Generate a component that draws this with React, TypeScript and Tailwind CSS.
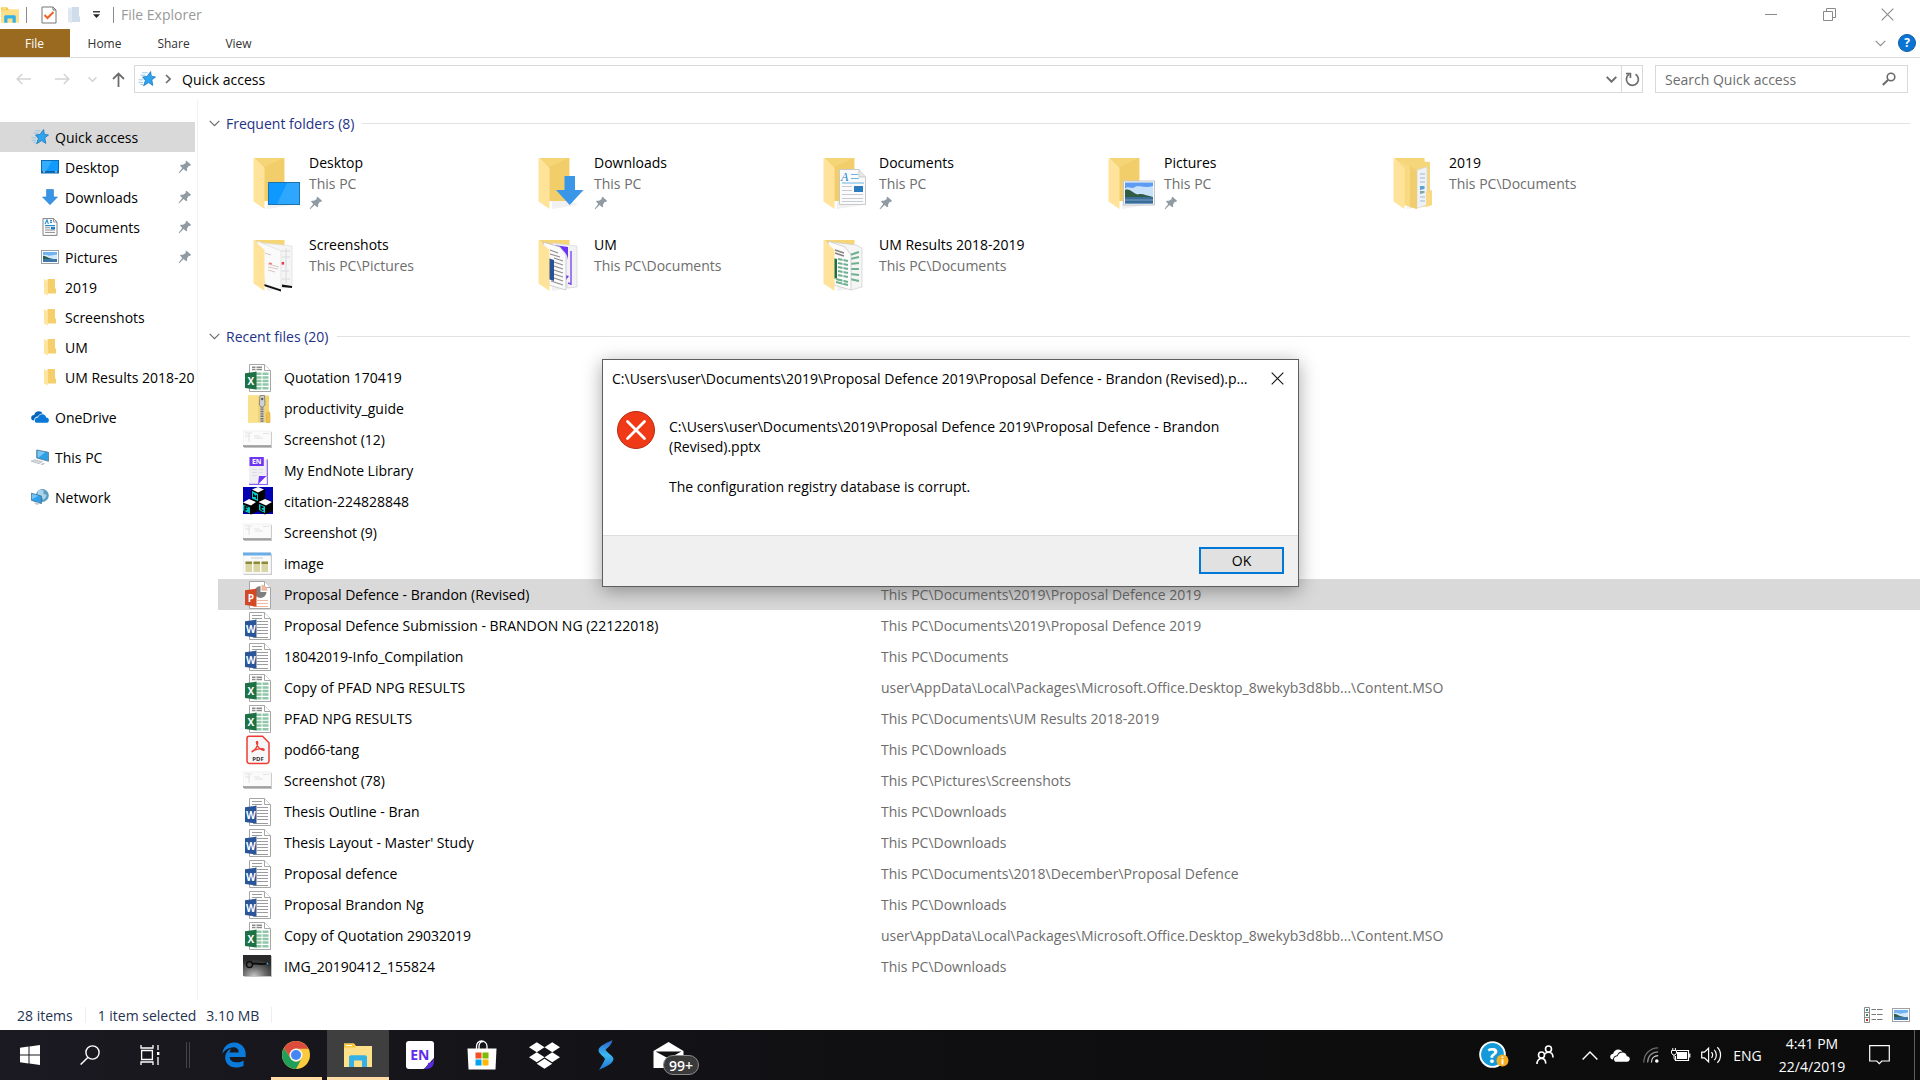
import React from 'react'
import { FaDropbox, FaEdgeLegacy } from 'react-icons/fa'

type FileKind = 'excel' | 'word' | 'ppt' | 'zip' | 'shot' | 'endnote' | 'mfc' | 'image' | 'pdf' | 'photo'

interface RecentFile {
  name: string
  kind: FileKind
  path: string
  selected?: boolean
}

const recentFiles: RecentFile[] = [
  { name: 'Quotation 170419', kind: 'excel', path: '' },
  { name: 'productivity_guide', kind: 'zip', path: '' },
  { name: 'Screenshot (12)', kind: 'shot', path: '' },
  { name: 'My EndNote Library', kind: 'endnote', path: '' },
  { name: 'citation-224828848', kind: 'mfc', path: '' },
  { name: 'Screenshot (9)', kind: 'shot', path: '' },
  { name: 'image', kind: 'image', path: '' },
  {
    name: 'Proposal Defence - Brandon (Revised)',
    kind: 'ppt',
    path: 'This PC\\Documents\\2019\\Proposal Defence 2019',
    selected: true,
  },
  {
    name: 'Proposal Defence Submission - BRANDON NG (22122018)',
    kind: 'word',
    path: 'This PC\\Documents\\2019\\Proposal Defence 2019',
  },
  { name: '18042019-Info_Compilation', kind: 'word', path: 'This PC\\Documents' },
  {
    name: 'Copy of PFAD NPG RESULTS',
    kind: 'excel',
    path: 'user\\AppData\\Local\\Packages\\Microsoft.Office.Desktop_8wekyb3d8bb...\\Content.MSO',
  },
  { name: 'PFAD NPG RESULTS', kind: 'excel', path: 'This PC\\Documents\\UM Results 2018-2019' },
  { name: 'pod66-tang', kind: 'pdf', path: 'This PC\\Downloads' },
  { name: 'Screenshot (78)', kind: 'shot', path: 'This PC\\Pictures\\Screenshots' },
  { name: 'Thesis Outline - Bran', kind: 'word', path: 'This PC\\Downloads' },
  { name: "Thesis Layout - Master' Study", kind: 'word', path: 'This PC\\Downloads' },
  { name: 'Proposal defence', kind: 'word', path: 'This PC\\Documents\\2018\\December\\Proposal Defence' },
  { name: 'Proposal Brandon Ng', kind: 'word', path: 'This PC\\Downloads' },
  {
    name: 'Copy of Quotation 29032019',
    kind: 'excel',
    path: 'user\\AppData\\Local\\Packages\\Microsoft.Office.Desktop_8wekyb3d8bb...\\Content.MSO',
  },
  { name: 'IMG_20190412_155824', kind: 'photo', path: 'This PC\\Downloads' },
]

type FolderKind = 'desktop' | 'downloads' | 'documents' | 'pictures' | '2019' | 'shots' | 'um' | 'results'

const folders: { name: string; parent: string; kind: FolderKind; pinned?: boolean }[] = [
  { name: 'Desktop', parent: 'This PC', kind: 'desktop', pinned: true },
  { name: 'Downloads', parent: 'This PC', kind: 'downloads', pinned: true },
  { name: 'Documents', parent: 'This PC', kind: 'documents', pinned: true },
  { name: 'Pictures', parent: 'This PC', kind: 'pictures', pinned: true },
  { name: '2019', parent: 'This PC\\Documents', kind: '2019' },
  { name: 'Screenshots', parent: 'This PC\\Pictures', kind: 'shots' },
  { name: 'UM', parent: 'This PC\\Documents', kind: 'um' },
  { name: 'UM Results 2018-2019', parent: 'This PC\\Documents', kind: 'results' },
]

/* ---------- small glyphs ---------- */

const PinIcon = () => (
  <svg width="14" height="14" viewBox="0 0 14 14" className="shrink-0" fill="#8f9aa3" aria-hidden="true">
    <path d="M8.5 0.8 13 4.8 12 6 10.8 5.8 9 8.4 9.2 10.4 8.2 11.2 5.6 9 1.2 13.2 0.6 12.8 4.3 7.9 2 5.6 2.9 4.7 5 4.8 7.8 3 7.5 1.8Z" />
  </svg>
)

const StarIcon = () => (
  <svg width="18" height="16" viewBox="0 0 18 16" className="shrink-0" aria-hidden="true">
    <path
      d="M12.6 0.6 13.3 5.2 17.5 6 13.8 8.8 14.8 14.4 10.6 11.6 5.6 14.8 7.4 9.4 4.6 6 9 5.4Z"
      fill="#2ea3ee"
      stroke="#1a78bf"
      strokeWidth="0.8"
    />
    <path d="M4.2 1.8H9.6M2.6 4.2H7.6M0.4 8.8H5.4M0.6 11.4H5M2.4 13.6H5" stroke="#8fc3e8" strokeWidth="0.9" />
  </svg>
)

const Chevron = ({ color = '#6b6b6b', width = 11, strokeWidth = 1.2 }) => (
  <svg width={width} height="7" viewBox="0 0 11 7" className="shrink-0" fill="none" aria-hidden="true">
    <path d="M0.7 0.9 5.5 5.7 10.3 0.9" stroke={color} strokeWidth={strokeWidth} />
  </svg>
)

const CloseIcon = ({ color }: { color: string }) => (
  <svg width="13" height="13" viewBox="0 0 13 13" fill="none" aria-hidden="true">
    <path d="M0.7 0.7 12.3 12.3M12.3 0.7 0.7 12.3" stroke={color} strokeWidth="1.1" />
  </svg>
)

const LandscapeIcon = ({ width = 18, height = 14 }) => (
  <svg width={width} height={height} viewBox="0 0 18 14" className="shrink-0" aria-hidden="true">
    <rect x="0.5" y="0.5" width="17" height="13" fill="#fff" stroke="#9aa1a8" />
    <rect x="2" y="2" width="14" height="10" fill="#6fb2f5" />
    <path d="M2 5.4C4 4 6 5 8 5.8L16 4.4V9H2Z" fill="#d3e9fb" />
    <path d="M2 6C5 5.8 7 8 12 9H2Z" fill="#2e5d4e" />
    <rect x="2" y="9" width="14" height="3" fill="#3d77ab" />
  </svg>
)

/* ---------- navigation pane icons ---------- */

const DesktopIcon = () => (
  <svg width="18" height="14" viewBox="0 0 18 14" aria-hidden="true">
    <rect x="0.5" y="0.5" width="17" height="12.5" fill="#0f9bff" stroke="#0b6cb5" />
    <path d="M11 1 5 11H1V1Z" fill="#35adff" />
    <rect x="1" y="11" width="16" height="1.5" fill="#0d5f9e" />
    <path d="M2 11.8H4M14 11.8H16" stroke="#fff" strokeWidth="0.8" />
  </svg>
)

const DownloadIcon = () => (
  <svg width="16" height="16" viewBox="0 0 16 16" aria-hidden="true">
    <path d="M4.5 0.5H11.5V8H15.5L8 15.7 0.5 8H4.5Z" fill="#3794e6" stroke="#2c7fcb" strokeWidth="0.6" />
  </svg>
)

const DocumentIcon = () => (
  <svg width="16" height="18" viewBox="0 0 16 18" aria-hidden="true">
    <path d="M1 0.6H11.5L15 4V17.4H1Z" fill="#fff" stroke="#818181" />
    <path d="M11.5 0.6V4H15" fill="none" stroke="#818181" strokeWidth="0.8" />
    <path d="M3 6 5 2 6.4 6M8 2.6H10M8 4.4H10M3 7.6H13" stroke="#2490d8" strokeWidth="1.1" fill="none" />
    <path d="M3 9.8H8M3 12H13M3 14.4H13" stroke="#8c8c8c" strokeWidth="1" />
    <rect x="9" y="9" width="4" height="2.4" fill="#1c7fc4" />
  </svg>
)

const SmallFolderIcon = () => (
  <svg width="12" height="18" viewBox="0 0 12 18" aria-hidden="true">
    <path d="M0 1H11V10L12 11V15.5H3.5V1Z" fill="#f5cf6b" />
    <path d="M0 1 3.8 3.2V17.4L0 15.4Z" fill="#ffe49b" />
  </svg>
)

const OneDriveIcon = () => (
  <svg width="18" height="12" viewBox="0 0 18 12" aria-hidden="true">
    <path
      d="M3 9.6C1 9.4 0 8 0.2 6.4 0.5 4.8 1.8 4 3.2 4.1 3.6 1.8 5.6 0.3 7.8 0.3 9.6 0.3 10.8 1.2 11.6 2.4 9 2.4 7.4 3.8 6.8 5.6 4.6 5.6 3 7.4 3 9.6Z"
      fill="#0364b8"
    />
    <path
      d="M6 11.8C4.6 11.8 3.8 10.8 3.8 9.4 3.8 7.6 5.2 6.4 7 6.6 7.6 4.4 9.2 3.2 11.2 3.2 13.4 3.2 14.9 4.6 15.1 6.6 16.8 6.6 17.9 7.8 17.9 9.2 17.9 10.8 16.8 11.8 15.2 11.8Z"
      fill="#0a78d7"
    />
  </svg>
)

const ThisPcIcon = () => (
  <svg width="19" height="17" viewBox="0 0 19 17" aria-hidden="true">
    <path d="M6 0.5 18.5 3V12.5L6 9Z" fill="#2f9fe6" stroke="#5b7386" strokeWidth="0.8" />
    <path d="M7 1.5 15 3 8 8.4 7 8Z" fill="#7cc8f5" />
    <path d="M0 12.4 4 10.8 12 13 8.4 15Z" fill="#d4d9dd" stroke="#a2abb2" strokeWidth="0.6" />
    <path d="M10 15.5 13 14.4 15 15 12 16.5Z" fill="#b4bcc2" />
  </svg>
)

const NetworkIcon = () => (
  <svg width="19" height="18" viewBox="0 0 19 18" aria-hidden="true">
    <circle cx="12" cy="7.4" r="6.8" fill="#5d9dc2" />
    <path d="M7 3C9 1 12 1.4 14 2.6 12 4 13 6 16 6.4 17 8 15 11 13 12 12 9 9 8 7 7Z" fill="#a9d4ea" />
    <path d="M0.4 5 11 8V16L0.4 12.5Z" fill="#2fa0ea" stroke="#426a86" strokeWidth="0.8" />
    <path d="M1 5.8 8 7.6 1 11.4Z" fill="#74c4f5" />
    <path d="M3 15.4 7 14.6 10 16 6 17.4Z" fill="#c3cbd1" />
  </svg>
)

/* ---------- folder tiles ---------- */

const FolderIcon = ({ kind }: { kind: FolderKind }) => {
  const open = kind === '2019' || kind === 'shots' || kind === 'um' || kind === 'results'
  return (
    <svg width="50" height="56" viewBox="0 0 50 56" className="shrink-0" aria-hidden="true">
      <path d="M14 45H34L40 49 14 53Z" fill="#f1f1f1" />
      <path d="M1 2H31.5V45H11V12Z" fill="#f5d576" />
      {!open && <path d="M11 11 31 2V45H11Z" fill="#f0c964" opacity="0.6" />}

      {kind === 'desktop' && (
        <g>
          <rect x="15.5" y="26.5" width="31" height="22" fill="#0d99ff" stroke="#1d72ae" />
          <path d="M34 27H46V48H24Z" fill="#2ea8ff" />
        </g>
      )}
      {kind === 'downloads' && <path d="M26.5 20H37V34H45.5L31.7 49 18 34H26.5Z" fill="#3a97e8" />}
      {kind === 'documents' && (
        <g>
          <path d="M16.5 13.5H36L42.5 21V48.5H16.5Z" fill="#fbfbfb" stroke="#c9c9c9" />
          <path d="M36 13.5V21H42.5" fill="#e7e7e7" stroke="#c9c9c9" />
          <text x="18" y="25" fontSize="12" fontStyle="italic" fontFamily="Liberation Serif" fill="#1c84cf">
            A
          </text>
          <path d="M28 18.5H35M28 22.5H36M19 27H41" stroke="#69b4e4" />
          <path d="M19 30.5H29M19 34.5H29M19 38.5H40M19 42.5H40M19 45.5H40" stroke="#c5ccd2" />
          <rect x="31" y="30" width="9" height="6" fill="#2b7cbf" />
        </g>
      )}
      {kind === 'pictures' && (
        <g>
          <rect x="15.5" y="25" width="31" height="24" fill="#f7f7f7" stroke="#c6c6c6" />
          <rect x="17" y="26.5" width="28" height="21" fill="#5e9bf3" />
          <path d="M17 33C20 29 23 34 27 31 31 28 35 33 45 30V42H17Z" fill="#c8e1fa" />
          <path d="M17 34C22 32 24 37 30 38.5 34 37 39 40 45 41H17Z" fill="#2f5c43" />
          <path d="M17 41H45V47.5H17Z" fill="#3a6c99" />
          <path d="M17 44H45" stroke="#7ca3c5" />
        </g>
      )}

      {kind === '2019' && (
        <g>
          <path d="M6 3 37 6V50L22 52Z" fill="#f6d67b" />
          <path d="M24 14 34 11V49L24 52Z" fill="#eef2f6" stroke="#cfd6dc" strokeWidth="0.6" />
          <path d="M27 18H32M27 22H32M27 26H32M27 41H32M27 45H32" stroke="#9fb9d0" />
          <path d="M27 30H31.5V33L27 34Z" fill="#5ba0d3" />
          <path d="M27 35H31.5V37L27 38Z" fill="#7fa8a0" />
          <path d="M6 5 24 14V53L11 49Z" fill="#f8da82" />
          <path d="M24 14V53L17 51V10Z" fill="#f1cd6d" />
          <path d="M33 36 39 34V49L33 51Z" fill="#f8d882" />
        </g>
      )}
      {kind === 'shots' && (
        <g>
          <path d="M10 5 39 8V49L26 48Z" fill="#f5f5f5" stroke="#dcdcdc" strokeWidth="0.7" />
          <path d="M28 13H37M29 19H37M29 33H36M29 41H37M33 10V45" stroke="#d8dade" />
          <rect x="28.5" y="24" width="2.6" height="2.6" fill="#e63946" />
          <path d="M29 46.5 39 48V50L29 49Z" fill="#111" />
          <path d="M4 3 28 13V52L12 46Z" fill="#fafafa" stroke="#dedede" strokeWidth="0.7" />
          <path d="M12 15 18 17M15 26 26 29M15 29 25 31M15 32 22 34" stroke="#d8c4c6" />
          <path d="M16 25 19 26" stroke="#ee7d84" strokeWidth="1.4" />
          <path d="M11 46 28 51.5V53.5L11 48Z" fill="#111" />
        </g>
      )}
      {kind === 'um' && (
        <g>
          <path d="M14 5 39 8V49L30 50Z" fill="#f2f2f4" stroke="#d7d7dc" strokeWidth="0.7" />
          <path d="M16 7 30 9V22C29 14 24 11 16 7Z" fill="#6b35f5" />
          <path d="M33 13V47M30 45 33 46" stroke="#7c4af0" strokeWidth="1.4" />
          <path d="M27 37 31 38 28 42Z" fill="#6b35f5" />
          <path d="M5 4 22 9 28 17V52L11 47Z" fill="#fbfbfb" stroke="#bcbcbc" strokeWidth="0.7" />
          <path
            d="M12 12 20 15M12 16 22 19M16 20 25 23M16 24 25 27M16 28 25 31M16 32 25 35M16 36 25 39M16 40 25 43M13 43 25 47"
            stroke="#8d8d8d"
            strokeWidth="1.2"
          />
          <path d="M10 20 16 22V43L10 41Z" fill="#285293" />
        </g>
      )}
      {kind === 'results' && (
        <g>
          <path d="M8 4 33 7 39 10V49L28 52Z" fill="#f5f5f5" stroke="#cfcfcf" strokeWidth="0.7" />
          <path d="M27 17 36 14M27 21 36 19M27 26 36 25M27 31 36 31M27 36 36 37M27 41 36 43" stroke="#6fb08e" strokeWidth="2.2" />
          <path d="M5 3 22 9 28 17V52L11 47Z" fill="#fcfcfc" stroke="#c4c4c4" strokeWidth="0.7" />
          <path d="M12 12 21 15M12 15 21 18" stroke="#858585" strokeWidth="1.8" />
          <path
            d="M15 21 25 23M15 25 25 27M15 29 25 31M15 33 25 35M15 37 25 39M13 41 25 44M13 44 25 47"
            stroke="#6fb08e"
            strokeWidth="2"
          />
          <path d="M20 19V46" stroke="#fcfcfc" />
          <path d="M10 20 14 21V40L10 41Z" fill="#1d7044" />
        </g>
      )}

      <path d="M0.5 2 11.5 12V53L0.5 45.5Z" fill="#ffe39a" />
    </svg>
  )
}

/* ---------- file list icons ---------- */

const OfficePage = ({ badge, letter, children }: { badge: string; letter: string; children: React.ReactNode }) => (
  <g>
    <path d="M6.5 2.5H21.5L27.5 8.5V29.5H6.5Z" fill="#fff" stroke="#a6a6a6" />
    <path d="M21.5 2.5V8.5H27.5" fill="#fff" stroke="#a6a6a6" />
    {children}
    <path d="M2 11.2 13.5 9.6V27.6L2 26Z" fill={badge} />
    <text x="7.8" y="22.6" fontSize="10" fontWeight="700" fontFamily="Open Sans" textAnchor="middle" fill="#fff">
      {letter}
    </text>
  </g>
)

const FileIcon = ({ kind }: { kind: FileKind }) => (
  <svg width="30" height="31" viewBox="0 0 30 31" className="block" aria-hidden="true">
    {kind === 'excel' && (
      <OfficePage badge="#1e7145" letter="X">
        <path d="M9 5.3H12.5M13.5 5.3H19M9 7.4H12.5M13.5 7.4H19" stroke="#8b8b8b" strokeWidth="1.5" />
        <path
          d="M13 11.8H18.5M13 15.4H18.5M13 19H18.5M13 22.6H18.5M13 26.2H18.5M19.5 11.8H25.5M19.5 15.4H25.5M19.5 19H25.5M19.5 22.6H25.5M19.5 26.2H25.5"
          stroke="#8fc7a8"
          strokeWidth="2.5"
        />
      </OfficePage>
    )}
    {kind === 'word' && (
      <OfficePage badge="#2a5699" letter="W">
        <path
          d="M9 5.5H19M9 8.5H19M14 11.5H25M14 14.5H25M14 17.5H25M14 20.5H25M14 23.5H25M10 27.5H25"
          stroke="#9c9c9c"
        />
      </OfficePage>
    )}
    {kind === 'ppt' && (
      <OfficePage badge="#d24726" letter="P">
        <path d="M17.5 7A6 6 0 1 0 23.5 13H17.5Z" fill="#7f7f7f" />
        <path d="M18.5 5.8A6 6 0 0 1 24.5 11.8H18.5Z" fill="#f2b79f" />
        <path d="M14 21.5H25M14 24.5H25M10 27.5H25" stroke="#f2b79f" />
      </OfficePage>
    )}
    {kind === 'zip' && (
      <g>
        <path d="M5 2.5H26V18L27 20V29.5H5Z" fill="#f6d46c" />
        <path d="M5 2.5H15V29.5H5Z" fill="#fbe08b" />
        <path d="M23.5 29.5V20.5C25 18 27 19 27 21V29.5Z" fill="#efc24f" stroke="#d9a938" strokeWidth="0.6" />
        <path d="M19 3V29.5" stroke="#d7d0b4" strokeWidth="5" />
        <path d="M19 13V29.5" stroke="#6f6f6f" strokeWidth="3" strokeDasharray="1.4 1" />
        <path d="M17 2.5H21.5L22 12 19.2 14.5 16.4 12Z" fill="#cfd2d5" stroke="#77797c" strokeWidth="0.8" />
        <circle cx="19.2" cy="6" r="1.2" fill="#5c5e60" />
      </g>
    )}
    {kind === 'shot' && (
      <g>
        <rect x="1" y="8" width="28" height="16" fill="#c5c5c5" />
        <rect x="0" y="7" width="28" height="15.5" fill="#fbfbfb" stroke="#e1e1e1" strokeWidth="0.5" />
        <path d="M2 9H9M2 12H7M6 9V18M11 12H17M12 14H20M20 9.5H26" stroke="#e2e2e2" />
        <path d="M0 22H28" stroke="#5c5c5c" />
      </g>
    )}
    {kind === 'endnote' && (
      <g>
        <path d="M6 2H20.5V4H25V30H6Z" fill="#efeff3" />
        <path d="M24.3 4.5V29.3H6" fill="none" stroke="#8a63ee" strokeWidth="1.2" />
        <path d="M6.5 2H20.8V11H6.5Z" fill="#6f35f5" />
        <path d="M9 14.5H14M9 17.5H14M9 20.5H14M16 14.5H20M16 17.5H20" stroke="#dcdce4" />
        <path d="M15 29.5 16 21H24Z" fill="#6f35f5" />
        <path d="M16 28.5 23.5 21V29Z" fill="#fff" />
        <text x="13.7" y="9.2" fontSize="7" fontWeight="700" fontFamily="Open Sans" textAnchor="middle" fill="#fff">
          EN
        </text>
      </g>
    )}
    {kind === 'mfc' && (
      <g>
        <rect x="0" y="1" width="30" height="27" fill="#0000b4" />
        <path d="M0 17 8 12.5 8 4 14 1.5 22 3.5V12.5L30 16V25L22 28.5 15 25 8 28.5 0 25Z" fill="#000" />
        <path d="M9 3.5 15 1 21 3.5 15 6.5Z" fill="#fff" />
        <path d="M9 5 15 8V15L9 12.5Z" fill="#00d5d5" />
        <path d="M0 16.5 6 13 13 16 8 19.5Z" fill="#fff" />
        <path d="M0 18.5 7 21.5V27.5L0 24.5Z" fill="#00c8c8" />
        <path d="M15.5 16 22 13 29 16 23 19.5Z" fill="#fff" />
        <path d="M16 18 22 20.5V27L16 24Z" fill="#00d5d5" />
        <path d="M10.5 11V8.5L12 10.5 13.5 9.8V13M2 25V20.5L5 21.5M2 23 4 23.6M20.5 21.5 18 20.2V23.5L20.5 24.8" stroke="#000" strokeWidth="1.2" fill="none" />
      </g>
    )}
    {kind === 'image' && (
      <g>
        <rect x="1" y="6" width="28" height="21" fill="#c8c8c8" />
        <rect x="0" y="5" width="28" height="21" fill="#fafafa" stroke="#d8d8d8" strokeWidth="0.5" />
        <rect x="0" y="4.5" width="28" height="3" fill="#6aaee6" />
        <path d="M8 10H20" stroke="#c9ced2" />
        <path d="M2.5 14H9V24H2.5ZM10.5 14H17V24H10.5ZM18.5 14H25V24H18.5Z" fill="#d9d6a4" />
        <path d="M2.5 13.5H9V16H2.5ZM10.5 13.5H17V16H10.5ZM18.5 13.5H25V16H18.5Z" fill="#8d8a36" />
      </g>
    )}
    {kind === 'pdf' && (
      <g>
        <path
          d="M6 2.2H19.5L26 8.7V27C26 28.6 25.2 29.4 23.6 29.4H6.4C4.8 29.4 4 28.6 4 27V4.6C4 3 4.6 2.2 6 2.2Z"
          fill="#f7f7f7"
          stroke="#ee3b32"
          strokeWidth="1.5"
        />
        <path
          d="M9.5 17.6C12 16.5 15 12 14.6 8.2 14.4 7 13.2 7.4 13.5 9 14 12 17 16 20.4 16.3 21.8 16.2 21.2 14.6 19 14.6 15.5 14.6 12.5 15.4 9.8 16.8 8.6 17.6 9 18.2 9.5 17.6Z"
          fill="none"
          stroke="#ee3b32"
          strokeWidth="1.3"
        />
        <text x="15" y="26.6" fontSize="6" fontWeight="700" fontFamily="Open Sans" textAnchor="middle" fill="#333">
          PDF
        </text>
      </g>
    )}
    {kind === 'photo' && (
      <g>
        <defs>
          <radialGradient id="photo-glow" cx="0.4" cy="1" r="0.8">
            <stop offset="0" stopColor="#c4c4c4" />
            <stop offset="0.5" stopColor="#6c6c6c" />
            <stop offset="1" stopColor="#2a2a2a" />
          </radialGradient>
        </defs>
        <rect x="1" y="5" width="28" height="21" fill="#c4c4c4" />
        <rect x="0" y="4" width="28" height="21" fill="url(#photo-glow)" />
        <circle cx="6.5" cy="13.5" r="3" fill="none" stroke="#0c0c0c" strokeWidth="1.4" />
        <path d="M9 13C14 11 18 15 26 12" stroke="#0c0c0c" strokeWidth="1.8" fill="none" />
        <circle cx="24.5" cy="12.5" r="1" fill="#4ba3e0" />
      </g>
    )}
  </svg>
)

/* ---------- taskbar icons ---------- */

const ExplorerIcon = ({ size }: { size: number }) => (
  <svg width={size} height={size} viewBox="0 0 28 28" aria-hidden="true">
    <path d="M0 2.5H10L12 5H28V26H0Z" fill="#ffe08a" />
    <path d="M0 2.5H10L12 6.5H0Z" fill="#f8c73b" />
    <path d="M2 4.5H8" stroke="#fff" strokeWidth="1" />
    <path d="M5 26V16.5C5 15 5.8 14.2 7.2 14.2H20.8C22.2 14.2 23 15 23 16.5V26H18V19.5H10V26Z" fill="#35b1e6" />
  </svg>
)

const ChromeIcon = () => (
  <svg width="28" height="28" viewBox="0 0 28 28" aria-hidden="true">
    <circle cx="14" cy="14" r="14" fill="#fccb3d" />
    <path d="M1.9 7A14 14 0 0 1 26.1 7L26.2 7.8H14A6.4 6.4 0 0 0 8.5 17.2Z" fill="#dd4b3e" />
    <path d="M1.9 7A14 14 0 0 0 14 28L19.8 17.2A6.4 6.4 0 0 1 8.5 17.2L1.9 7Z" fill="#1f9f5a" />
    <circle cx="14" cy="14" r="6.5" fill="#f4f4f4" />
    <circle cx="14" cy="14" r="5" fill="#4586f3" />
  </svg>
)

const TaskButton = ({
  label,
  width = 'w-[62px]',
  state = '',
  children,
}: {
  label: string
  width?: string
  state?: string
  children: React.ReactNode
}) => (
  <button type="button" aria-label={label} className={`relative flex h-full ${width} items-center justify-center ${state}`}>
    {children}
  </button>
)

/* ---------- page sections ---------- */

const TitleBar = () => (
  <header className="flex h-[29px] items-start">
    <div className="flex h-[29px] items-center">
      <div className="w-[26px] pl-px">
        <ExplorerIcon size={18} />
      </div>
      <div className="h-4 w-px bg-[#8a8a8a]" />
      <button type="button" aria-label="Properties" className="ml-[14px]">
        <svg width="16" height="18" viewBox="0 0 16 18" aria-hidden="true">
          <path d="M1 1H12L15 4V17H1Z" fill="#fff" stroke="#767676" />
          <path d="M12 1V4H15" fill="none" stroke="#767676" />
          <path d="M3.5 9 6.5 12 12.5 6" stroke="#f0602a" strokeWidth="2" fill="none" />
        </svg>
      </button>
      <button type="button" aria-label="New folder" className="ml-[11px]">
        <svg width="12" height="18" viewBox="0 0 12 18" aria-hidden="true">
          <path d="M0 1H11V10L12 11V16H3.5V1Z" fill="#cfdcea" />
          <path d="M0 1 3.8 3.2V17.4L0 15.4Z" fill="#dfe8f2" />
        </svg>
      </button>
      <button type="button" aria-label="Customize Quick Access Toolbar" className="ml-[13px]">
        <svg width="7" height="8" viewBox="0 0 7 8" aria-hidden="true">
          <path d="M0 0.8H7" stroke="#222" strokeWidth="1.3" />
          <path d="M0 3.2H7L3.5 7Z" fill="#222" />
        </svg>
      </button>
      <div className="ml-[13px] h-4 w-px bg-[#8a8a8a]" />
      <h1 className="ml-[7px] text-[14px] text-[#999]">File Explorer</h1>
    </div>
    <div className="ml-auto flex h-[29px] pr-1">
      <button type="button" aria-label="Minimize" className="flex w-[58px] items-center justify-center">
        <span className="h-px w-3 bg-[#8a8a8a]" />
      </button>
      <button type="button" aria-label="Restore" className="flex w-[58px] items-center justify-center">
        <svg width="13" height="13" viewBox="0 0 13 13" fill="none" stroke="#8a8a8a" aria-hidden="true">
          <path d="M0.5 3.5H9.5V12.5H0.5ZM3.5 3.5V0.5H12.5V9.5H9.5" />
        </svg>
      </button>
      <button type="button" aria-label="Close" className="flex w-[58px] items-center justify-center">
        <CloseIcon color="#8a8a8a" />
      </button>
    </div>
  </header>
)

const Ribbon = () => (
  <nav className="flex h-[29px] items-stretch border-b border-[#dadbdc] text-[12px] text-[#333]">
    <button type="button" className="w-[70px] bg-[#996a1f] pt-[2px] pr-px text-white">
      File
    </button>
    <button type="button" className="w-[69px] pt-[2px]">
      Home
    </button>
    <button type="button" className="w-[69px] pt-[2px]">
      Share
    </button>
    <button type="button" className="w-[61px] pt-[2px]">
      View
    </button>
    <div className="ml-auto flex items-center gap-[11px] pr-1">
      <button type="button" aria-label="Expand the Ribbon">
        <Chevron color="#8f8f8f" width={13} />
      </button>
      <button
        type="button"
        aria-label="Help"
        className="flex h-[18px] w-[18px] items-center justify-center rounded-full border border-[#0c5ea6] bg-[#0a74d4] text-[12px] font-bold text-white"
      >
        ?
      </button>
    </div>
  </nav>
)

const AddressRow = () => (
  <div className="flex h-[42px] items-center pr-3">
    <div className="flex w-[134px] shrink-0 items-center">
      <button type="button" aria-label="Back" className="ml-4">
        <svg width="16" height="12" viewBox="0 0 16 12" fill="none" stroke="#d3d3d3" strokeWidth="1.5" aria-hidden="true">
          <path d="M15 6H1.2M6.2 1 1.2 6 6.2 11" />
        </svg>
      </button>
      <button type="button" aria-label="Forward" className="ml-[22px]">
        <svg width="16" height="12" viewBox="0 0 16 12" fill="none" stroke="#d3d3d3" strokeWidth="1.5" aria-hidden="true">
          <path d="M1 6H14.8M9.8 1 14.8 6 9.8 11" />
        </svg>
      </button>
      <button type="button" aria-label="Recent locations" className="ml-[18px]">
        <Chevron color="#d3d3d3" width={9} strokeWidth={1.8} />
      </button>
      <button type="button" aria-label="Up" className="ml-[15px]">
        <svg width="13" height="15" viewBox="0 0 13 15" fill="none" stroke="#6e6e6e" strokeWidth="1.8" aria-hidden="true">
          <path d="M6.5 15V1.5M1 7 6.5 1.5 12 7" />
        </svg>
      </button>
    </div>
    <div className="flex h-7 flex-1 items-center border border-[#d9d9d9]">
      <div className="ml-[3px]">
        <StarIcon />
      </div>
      <svg width="6" height="10" viewBox="0 0 6 10" fill="none" stroke="#6b6b6b" strokeWidth="1.6" className="ml-[9px]" aria-hidden="true">
        <path d="M1 1 5 5 1 9" />
      </svg>
      <button type="button" className="ml-[11px] text-[14px] text-black">
        Quick access
      </button>
      <button type="button" aria-label="Previous locations" className="mr-1 ml-auto">
        <Chevron color="#6e6e6e" strokeWidth={2} />
      </button>
      <button type="button" aria-label="Refresh" className="flex h-full w-[21px] items-center justify-center border-l border-[#d9d9d9]">
        <svg width="15" height="15" viewBox="0 0 15 15" fill="none" stroke="#6e6e6e" strokeWidth="1.7" aria-hidden="true">
          <path d="M10.5 2.2A6 6 0 1 1 4 2.4" />
          <path d="M1 1.6H5.4V6" />
        </svg>
      </button>
    </div>
    <div className="ml-3 flex h-7 w-[253px] items-center border border-[#d9d9d9] pr-[11px] pl-[9px]">
      <input
        type="text"
        aria-label="Search Quick access"
        placeholder="Search Quick access"
        className="min-w-0 flex-1 text-[14px] outline-none placeholder:text-[#6d6d6d]"
      />
      <svg width="14" height="14" viewBox="0 0 14 14" fill="none" stroke="#6a6a6a" aria-hidden="true">
        <circle cx="9" cy="5" r="3.8" strokeWidth="1.6" />
        <path d="M6.2 7.8 0.8 13" strokeWidth="2" />
      </svg>
    </div>
  </div>
)

const navItems: { name: string; icon: React.ReactNode; pinned?: boolean }[] = [
  { name: 'Desktop', icon: <DesktopIcon />, pinned: true },
  { name: 'Downloads', icon: <DownloadIcon />, pinned: true },
  { name: 'Documents', icon: <DocumentIcon />, pinned: true },
  { name: 'Pictures', icon: <LandscapeIcon />, pinned: true },
  { name: '2019', icon: <SmallFolderIcon /> },
  { name: 'Screenshots', icon: <SmallFolderIcon /> },
  { name: 'UM', icon: <SmallFolderIcon /> },
  { name: 'UM Results 2018-2019', icon: <SmallFolderIcon /> },
]

const Sidebar = () => (
  <aside className="w-[198px] shrink-0 border-r border-[#f2f2f2] pt-[22px] pr-[2px] text-[14px] text-black">
    <a href="#quick-access" className="flex h-[30px] items-center bg-[#d9d9d9] pl-[31px]">
      <StarIcon />
      <span className="ml-[6px]">Quick access</span>
    </a>
    {navItems.map((item) => (
      <a key={item.name} href="#folder" className="flex h-[30px] items-center overflow-hidden pl-10">
        <span className="flex w-5 shrink-0 justify-center">{item.icon}</span>
        <span className="ml-[5px] whitespace-nowrap">{item.name}</span>
        {item.pinned && (
          <span className="mr-[3px] ml-auto">
            <PinIcon />
          </span>
        )}
      </a>
    ))}
    <div className="mt-[10px] flex flex-col gap-[10px]">
      {[
        { name: 'OneDrive', icon: <OneDriveIcon /> },
        { name: 'This PC', icon: <ThisPcIcon /> },
        { name: 'Network', icon: <NetworkIcon /> },
      ].map((item) => (
        <a key={item.name} href="#root" className="flex h-[30px] items-center pl-[31px]">
          <span className="flex w-[18px] shrink-0 justify-center">{item.icon}</span>
          <span className="ml-[6px]">{item.name}</span>
        </a>
      ))}
    </div>
  </aside>
)

const SectionHeader = ({ title }: { title: string }) => (
  <div className="flex h-6 items-center pr-[10px] pl-[11px]">
    <button type="button" className="flex items-center gap-[6px]">
      <Chevron />
      <h2 className="text-[14px] text-[#1e3287]">{title}</h2>
    </button>
    <div className="ml-2 h-px flex-1 bg-[#e2e2e2]" />
  </div>
)

const Content = () => (
  <main className="min-w-0 flex-1 pt-[11px]">
    <SectionHeader title="Frequent folders (8)" />
    <div className="mt-[17px] grid grid-cols-[repeat(auto-fill,285px)] pl-[55px]">
      {folders.map((folder) => (
        <a key={folder.name} href="#folder" className="flex h-[82px] items-start text-[14px] leading-[21px]">
          <span className="mt-1">
            <FolderIcon kind={folder.kind} />
          </span>
          <span className="ml-[6px]">
            <span className="block text-black">{folder.name}</span>
            <span className="block text-[#6d6d6d]">{folder.parent}</span>
            {folder.pinned && (
              <span className="mt-[2px] block">
                <PinIcon />
              </span>
            )}
          </span>
        </a>
      ))}
    </div>
    <div className="mt-2">
      <SectionHeader title="Recent files (20)" />
    </div>
    <div className="mt-[14px] pl-5">
      <table className="w-full table-fixed border-collapse text-left text-[14px]">
        <colgroup>
          <col className="w-[66px]" />
          <col className="w-[597px]" />
          <col />
        </colgroup>
        <tbody>
          {recentFiles.map((file) => (
            <tr key={file.name} className={file.selected ? 'h-[31px] bg-[#d9d9d9]' : 'h-[31px]'}>
              <td className="p-0 pl-[25px]">
                <FileIcon kind={file.kind} />
              </td>
              <td className="p-0 whitespace-nowrap text-black">{file.name}</td>
              <td className="p-0 whitespace-nowrap text-[#6d6d6d]">{file.path}</td>
            </tr>
          ))}
        </tbody>
      </table>
    </div>
  </main>
)

const StatusBar = () => (
  <footer className="flex h-[30px] items-center pr-[10px] pl-[17px] text-[14px] text-[#1f3350]">
    <span>28 items</span>
    <span className="ml-3 h-4 w-px bg-[#eee]" />
    <span className="ml-3">1 item selected</span>
    <span className="ml-[10px]">3.10 MB</span>
    <span className="ml-3 h-4 w-px bg-[#eee]" />
    <div className="ml-auto flex items-center gap-[9px]">
      <button type="button" aria-label="Details view">
        <svg width="19" height="16" viewBox="0 0 19 16" fill="none" aria-hidden="true">
          <path d="M0.5 0.5H5.5V15.5H0.5ZM0.5 5.5H5.5M0.5 10.5H5.5" stroke="#8a8a8a" />
          <path d="M7.5 2.5H12M13 2.5H18.5M7.5 7.5H12M13 7.5H18.5M7.5 12.5H12M13 12.5H18.5" stroke="#777" />
          <rect x="2" y="2" width="2" height="2" fill="#2c8c8a" />
          <rect x="2" y="7" width="2" height="2" fill="#4c8150" />
          <rect x="2" y="12" width="2" height="2" fill="#b3331f" />
        </svg>
      </button>
      <button type="button" aria-label="Large icons view">
        <LandscapeIcon />
      </button>
    </div>
  </footer>
)

const Taskbar = () => (
  <footer className="flex h-[50px] items-center bg-linear-to-r from-[#1b1a22] via-[#0f0e10] to-[#0c0c0c] text-white">
    <TaskButton label="Start" width="w-[60px]">
      <svg width="20" height="20" viewBox="0 0 20 20" fill="#fff" aria-hidden="true">
        <path d="M0 2.8 8.5 1.6V9.5H0ZM9.5 1.4 20 0V9.5H9.5ZM0 10.5H8.5V18.4L0 17.2ZM9.5 10.5H20V20L9.5 18.6Z" />
      </svg>
    </TaskButton>
    <TaskButton label="Search" width="w-[60px]">
      <svg width="20" height="20" viewBox="0 0 20 20" fill="none" stroke="#fff" strokeWidth="1.4" aria-hidden="true">
        <circle cx="12.5" cy="7.5" r="6.6" />
        <path d="M7.8 12.4 0.6 19.6" />
      </svg>
    </TaskButton>
    <TaskButton label="Task View" width="w-[60px]">
      <svg width="20" height="20" viewBox="0 0 20 20" fill="none" stroke="#fff" strokeWidth="1.3" aria-hidden="true">
        <path d="M1 0V3H13V0M1.6 5.5H12.4V14.5H1.6ZM1 20V17H13V20M18 0V5M18 12V20" />
        <rect x="17" y="7" width="2.4" height="3" fill="#fff" stroke="none" />
      </svg>
    </TaskButton>
    <div className="flex w-[23px] gap-[2px] pl-[6px]">
      <span className="h-[26px] w-px bg-[#444]" />
      <span className="h-[26px] w-px bg-[#444]" />
    </div>
    <TaskButton label="Microsoft Edge">
      <FaEdgeLegacy size={26} color="#0a7adb" />
    </TaskButton>
    <TaskButton label="Google Chrome">
      <ChromeIcon />
      <span className="absolute bottom-0 left-[6px] h-[3px] w-[51px] bg-[#ffdba6]" />
    </TaskButton>
    <TaskButton label="File Explorer" state="bg-[#3f3f40]">
      <ExplorerIcon size={28} />
      <span className="absolute bottom-0 left-0 h-[3px] w-full bg-[#ffdba6]" />
    </TaskButton>
    <TaskButton label="EndNote">
      <svg width="28" height="28" viewBox="0 0 28 28" aria-hidden="true">
        <path d="M3 0H25C27 0 28 1 28 3V17L18 28H3C1 28 0 27 0 25V3C0 1 1 0 3 0Z" fill="#fff" />
        <path d="M28 17V20C28 25 25 28 20 28H17C21 27 22 24 22 22 25 22 27 20 28 17Z" fill="#5a2be0" />
        <text x="13.8" y="18.5" fontSize="14" fontWeight="700" fontFamily="Open Sans" textAnchor="middle" fill="#5f2eea">
          EN
        </text>
      </svg>
    </TaskButton>
    <TaskButton label="Microsoft Store">
      <svg width="30" height="30" viewBox="0 0 30 30" aria-hidden="true">
        <path d="M9.5 9V6.5C9.5 3 11.6 1 14.5 1S20 3 20 6.5V9M12 9V6.5C12 3 14 1.4 16.4 1.6" fill="none" stroke="#fff" strokeWidth="1.3" />
        <path d="M0.5 8.5H29.5L28.5 29.5H1.5Z" fill="#fff" />
        <rect x="8.5" y="12.5" width="6" height="6" fill="#f25022" />
        <rect x="15.5" y="12.5" width="6" height="6" fill="#7fba00" />
        <rect x="8.5" y="19.5" width="6" height="6" fill="#00a4ef" />
        <rect x="15.5" y="19.5" width="6" height="6" fill="#ffb900" />
      </svg>
    </TaskButton>
    <TaskButton label="Dropbox">
      <FaDropbox size={31} color="#fff" />
    </TaskButton>
    <TaskButton label="Sway">
      <svg width="16" height="30" viewBox="0 0 16 30" aria-hidden="true">
        <defs>
          <linearGradient id="bolt" x1="0" y1="0" x2="0" y2="1">
            <stop offset="0" stopColor="#2a63c9" />
            <stop offset="0.5" stopColor="#3bb9f2" />
            <stop offset="1" stopColor="#1f6fd6" />
          </linearGradient>
        </defs>
        <path d="M14.5 0C8 3 1 6 0.5 10 0.5 14 6 16 7 19 5.5 23 3 26 1 30 7 27 15 24 15.5 19 15.6 16 9 13 7.5 9.5 11 7 14 4 14.5 0Z" fill="url(#bolt)" />
      </svg>
    </TaskButton>
    <TaskButton label="Mail">
      <svg width="31" height="28" viewBox="0 0 31 28" aria-hidden="true">
        <path d="M0.5 10 15.5 1 30.5 10V27H0.5Z" fill="#fff" />
        <path d="M2.5 10.5H28.5L15.5 17.5Z" fill="#111" />
      </svg>
      <span className="absolute top-[25px] right-0 flex h-5 w-9 items-center justify-center rounded-full border border-[#8b8b8b] bg-[#3a3a3a] text-[14px] font-semibold">
        99+
      </span>
    </TaskButton>

    <div className="ml-auto flex h-full items-center">
      <button type="button" aria-label="Get help" className="w-[42px]">
        <svg width="30" height="28" viewBox="0 0 30 28" className="mx-auto" aria-hidden="true">
          <circle cx="13.5" cy="13.5" r="13.3" fill="#fff" />
          <circle cx="13.5" cy="13.5" r="11.4" fill="#1599d8" />
          <text x="13.5" y="21.5" fontSize="21" fontWeight="700" fontFamily="Open Sans" textAnchor="middle" fill="#fff">
            ?
          </text>
          <circle cx="23.5" cy="19.5" r="6" fill="#f5ae22" />
          <path d="M23.5 15.4V17M23.5 18.2V23.4" stroke="#fff" strokeWidth="1.8" />
        </svg>
      </button>
      <button type="button" aria-label="People" className="w-[60px]">
        <svg width="18" height="20" viewBox="0 0 18 20" className="mx-auto" fill="none" stroke="#fff" strokeWidth="1.6" aria-hidden="true">
          <circle cx="12.5" cy="4" r="3" />
          <circle cx="5.5" cy="10" r="3" />
          <path d="M1 19C1 15.8 2.8 13.4 5.5 13.4S9.6 15.6 9.8 18.6M9 9C9.8 7.8 11 7.2 12.5 7.2 15.4 7.2 17 9.6 17 12.4" />
        </svg>
      </button>
      <button type="button" aria-label="Show hidden icons" className="w-[30px]">
        <svg width="16" height="9" viewBox="0 0 16 9" className="mx-auto" fill="none" stroke="#fff" strokeWidth="1.4" aria-hidden="true">
          <path d="M0.6 8.4 8 1 15.4 8.4" />
        </svg>
      </button>
      <button type="button" aria-label="OneDrive" className="w-[30px]">
        <svg width="20" height="13" viewBox="0 0 20 13" className="mx-auto" fill="#fff" aria-hidden="true">
          <path d="M3 10.6C1 10.4 0 9 0.2 7.2 0.5 5.6 1.8 4.6 3.2 4.7 3.6 2 5.8 0.4 8.4 0.4 10.2 0.4 11.6 1.4 12.4 2.6 9.4 2.6 7.8 4.2 7.2 6.2 4.8 6.4 3 8 3 10.6Z" />
          <path d="M6.6 12.8C5 12.8 4 11.8 4 10.2 4 8.4 5.6 7 7.6 7.2 8.2 4.8 10 3.4 12.4 3.4 14.8 3.4 16.6 5 16.8 7.2 18.6 7.2 19.8 8.4 19.8 10 19.8 11.6 18.6 12.8 17 12.8Z" />
        </svg>
      </button>
      <button type="button" aria-label="Wi-Fi" className="w-[31px]">
        <svg width="16" height="16" viewBox="0 0 16 16" className="mx-auto" fill="none" strokeWidth="1.3" aria-hidden="true">
          <path d="M0.8 15.5C0.8 7 7 0.9 15.2 0.9" stroke="#6b6b6b" />
          <path d="M4.6 15.5C4.6 9.2 9 4.8 15.2 4.8" stroke="#8a8a8a" />
          <path d="M8.4 15.5C8.4 11.4 11.2 8.6 15.2 8.6" stroke="#d5d5d5" />
          <circle cx="13.8" cy="14" r="1.8" fill="#fff" />
        </svg>
      </button>
      <button type="button" aria-label="Battery" className="w-[29px]">
        <svg width="20" height="14" viewBox="0 0 20 14" className="mx-auto" fill="none" stroke="#fff" aria-hidden="true">
          <path d="M6 2.5H17.5V12.5H4.5V8M18.8 5.5V9.5" strokeWidth="1.2" />
          <rect x="6" y="4" width="10" height="7" fill="#fff" stroke="none" />
          <path d="M0.5 2.5H5.5V5L4 7H2L0.5 5ZM1.8 0V2.5M4.4 0V2.5M3 7V9.5C3 11.5 4.5 12.5 6 12.5" />
        </svg>
      </button>
      <button type="button" aria-label="Volume" className="w-8">
        <svg width="21" height="18" viewBox="0 0 21 18" className="mx-auto" fill="none" stroke="#fff" strokeWidth="1.2" aria-hidden="true">
          <path d="M0.7 6.2H3.4L7.6 2.2V15.8L3.4 11.8H0.7Z" />
          <path d="M10.5 6.2C11.8 7.8 11.8 10.2 10.5 11.8M13.3 3.8C16 6.6 16 11.4 13.3 14.2M16.3 1.2C20.6 5.2 20.6 12.8 16.3 16.8" />
        </svg>
      </button>
      <button type="button" className="w-[41px] text-[14px]">
        ENG
      </button>
      <button type="button" className="flex w-[88px] flex-col items-center text-[14px] leading-[23px]">
        <span>4:41 PM</span>
        <span>22/4/2019</span>
      </button>
      <button type="button" aria-label="Notifications" className="flex w-[46px] justify-center">
        <svg width="21" height="20" viewBox="0 0 21 20" fill="none" stroke="#fff" strokeWidth="1.2" aria-hidden="true">
          <path d="M0.7 0.7H20.3V16H12.8L10.3 18.6 7.8 16H0.7Z" />
        </svg>
      </button>
      <button type="button" aria-label="Show desktop" className="ml-3 h-full w-[6px] border-l border-[#5c5c5c]" />
    </div>
  </footer>
)

const ErrorDialog = () => (
  <div
    role="dialog"
    aria-labelledby="dialog-title"
    className="absolute top-[359px] left-[602px] w-[697px] border border-[#5e5e5e] bg-white text-[14px] text-black shadow-[0_4px_18px_rgba(0,0,0,0.35)]"
  >
    <div className="flex h-9 items-center pr-[14px] pl-[9px]">
      <h2 id="dialog-title" className="whitespace-nowrap">
        C:\Users\user\Documents\2019\Proposal Defence 2019\Proposal Defence - Brandon (Revised).p...
      </h2>
      <button type="button" aria-label="Close" className="ml-auto">
        <CloseIcon color="#111" />
      </button>
    </div>
    <div className="flex h-[139px] items-start pt-[15px] pl-[14px]">
      <svg width="38" height="38" viewBox="0 0 38 38" className="shrink-0" aria-hidden="true">
        <circle cx="19" cy="19" r="18.5" fill="#f03a17" stroke="#b32c12" />
        <path d="M10.5 10.5 27.5 27.5M27.5 10.5 10.5 27.5" stroke="#fff" strokeWidth="2.8" strokeLinecap="round" />
      </svg>
      <div className="ml-[14px] flex flex-col gap-5 pt-[6px] leading-5">
        <p>
          C:\Users\user\Documents\2019\Proposal Defence 2019\Proposal Defence - Brandon
          <br />
          (Revised).pptx
        </p>
        <p>The configuration registry database is corrupt.</p>
      </div>
    </div>
    <div className="flex h-[51px] items-start justify-end border-t border-[#dfdfdf] bg-[#f0f0f0] pt-[11px] pr-[14px]">
      <button type="button" className="h-[27px] w-[85px] border-2 border-[#0078d7] bg-[#e1e1e1]">
        OK
      </button>
    </div>
  </div>
)

const App: React.FC = () => {
  return (
    <div className="relative flex min-h-screen flex-col bg-white font-['Open_Sans',sans-serif]">
      <TitleBar />
      <Ribbon />
      <AddressRow />
      <div className="flex flex-1">
        <Sidebar />
        <Content />
      </div>
      <StatusBar />
      <Taskbar />
      <ErrorDialog />
    </div>
  )
}

export default App
